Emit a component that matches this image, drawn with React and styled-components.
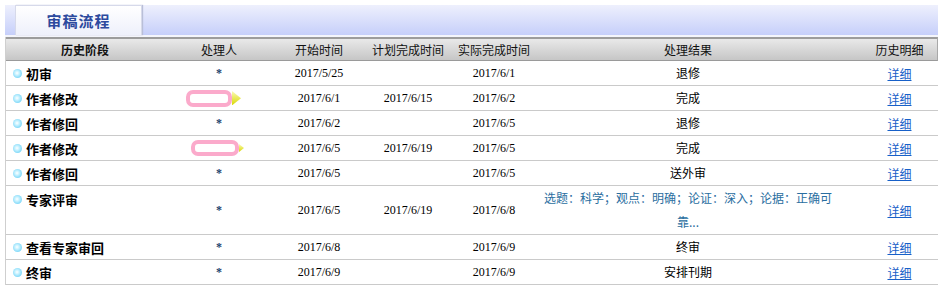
import React from 'react';
import styled, { createGlobalStyle } from 'styled-components';

const GlobalStyle = createGlobalStyle`
	body {
		margin: 0;
		background: #ffffff;
		font-family: "Liberation Serif", "Noto Sans CJK SC", serif;
	}
`;

const cjk = '"Noto Sans CJK SC", "Liberation Sans", sans-serif';

const COLS = [
	{ w: 158 },
	{ w: 110 },
	{ w: 90 },
	{ w: 88 },
	{ w: 84 },
	{ w: 304 },
	{ w: 99, pad: 20 }
];

const rows = [
	{ stage: '初审', who: '*', start: '2017/5/25', plan: '', done: '2017/6/1', result: '退修' },
	{ stage: '作者修改', who: 'tip', start: '2017/6/1', plan: '2017/6/15', done: '2017/6/2', result: '完成' },
	{ stage: '作者修回', who: '*', start: '2017/6/2', plan: '', done: '2017/6/5', result: '退修' },
	{ stage: '作者修改', who: 'tip2', start: '2017/6/5', plan: '2017/6/19', done: '2017/6/5', result: '完成' },
	{ stage: '作者修回', who: '*', start: '2017/6/5', plan: '', done: '2017/6/5', result: '送外审' },
	{ stage: '专家评审', who: '*', start: '2017/6/5', plan: '2017/6/19', done: '2017/6/8', result: '选题：科学；观点：明确；论证：深入；论据：正确可靠...', tall: true },
	{ stage: '查看专家审回', who: '*', start: '2017/6/8', plan: '', done: '2017/6/9', result: '终审' },
	{ stage: '终审', who: '*', start: '2017/6/9', plan: '', done: '2017/6/9', result: '安排刊期' }
];

const Page = styled.div`
	width: 933px;
	margin: 0 2px 0 5px;
`;

const TabBar = styled.div`
	display: flex;
	align-items: flex-end;
	margin-top: 5px;
	height: 30px;
	padding-left: 10px;
	background: linear-gradient(to bottom, #eef0fd, #c6cffa);
	border-bottom: 2px solid #f4f5fb;
`;

const Tab = styled.div`
	width: 125px;
	height: 29px;
	display: flex;
	align-items: center;
	justify-content: center;
	background: linear-gradient(to bottom, #ffffff, #eef0fb);
	border: 1px solid #d6d9ea;
	border-bottom: none;
	box-shadow: 1px 0 1px #b9bfd8;
	font-family: ${cjk};
	font-weight: bold;
	font-size: 15px;
	letter-spacing: 1px;
	color: #2d4a9e;
`;

const Table = styled.div`
	border-left: 1px solid #cfcfcf;
`;

const HeadRow = styled.div`
	display: flex;
	height: 21px;
	align-items: center;
	background: linear-gradient(to bottom, #e9e9e9, #c6c6c6);
	border-top: 2px solid #9c9c9c;
	border-bottom: 1px solid #9a9a9a;
	border-right: 1px solid #a8a8a8;
`;

const Row = styled.div`
	display: flex;
	height: ${p => (p.$tall ? 48 : 24)}px;
	border-bottom: 1px solid #cacaca;
`;

const Cell = styled.div`
	width: ${p => p.$w}px;
	padding-left: ${p => p.$pad || 0}px;
	flex-shrink: 0;
	box-sizing: border-box;
	display: flex;
	align-items: ${p => (p.$top ? 'flex-start' : 'center')};
	justify-content: ${p => (p.$left ? 'flex-start' : 'center')};
	text-align: center;
	font-size: 12px;
	color: #000;
`;

const HeadText = styled.span`
	font-family: ${cjk};
	font-size: 12px;
	font-weight: ${p => (p.$bold ? 'bold' : 'normal')};
	color: #111;
`;

const Stage = styled.span`
	display: flex;
	align-items: center;
	gap: 4px;
	padding-left: 7px;
	padding-top: ${p => (p.$top ? '4px' : 0)};
	font-family: ${cjk};
	font-weight: bold;
	font-size: 13px;
	color: #000;
`;

const Dot = styled.span`
	width: 9px;
	height: 9px;
	border-radius: 50%;
	background: radial-gradient(circle at 45% 45%, #ffffff 0%, #c8f2ff 30%, #4cc6f4 100%);
`;

const DateText = styled.span`
	font-family: "Liberation Serif", serif;
	font-size: 12px;
`;

const Star = styled.span`
	font-family: "Liberation Serif", serif;
	font-size: 12px;
	font-weight: bold;
	color: #1d3f6e;
`;

const Result = styled.span`
	font-family: ${cjk};
	font-size: 12px;
	line-height: 24px;
	color: ${p => (p.$blue ? '#2a6ea0' : '#000')};
	max-width: 290px;
`;

const Detail = styled.a`
	font-family: ${cjk};
	font-size: 12px;
	color: #1760c8;
	text-decoration: underline;
`;

const Tip = styled.span`
	display: flex;
	align-items: center;
	margin-left: ${p => p.$shift}px;
`;

const TipBox = styled.span`
	display: block;
	flex-shrink: 0;
	box-sizing: border-box;
	width: ${p => p.$w}px;
	height: ${p => p.$h}px;
	border: 4px solid #fbaacb;
	border-radius: 7px;
	background: #fff;
`;

const Arrow = ({ size }) => (
	<svg width={size} height={size * 1.6} viewBox="0 0 10 16">
		<defs>
			<linearGradient id={`ar${size}`} x1="0" y1="0" x2="0" y2="1">
				<stop offset="0" stopColor="#fbfbb8" />
				<stop offset="1" stopColor="#d8d800" />
			</linearGradient>
		</defs>
		<polygon points="0,0 10,8 0,16" fill={`url(#ar${size})`} />
	</svg>
);

const Who = ({ v }) => {
	if (v === 'tip') {
		return (
			<Tip $shift={-12}>
				<TipBox $w={46} $h={17} />
				<Arrow size={9} />
			</Tip>
		);
	}
	if (v === 'tip2') {
		return (
			<Tip $shift={-4}>
				<TipBox $w={48} $h={16} />
				<Arrow size={5} />
			</Tip>
		);
	}
	return <Star>*</Star>;
};

const heads = ['历史阶段', '处理人', '开始时间', '计划完成时间', '实际完成时间', '处理结果', '历史明细'];

export default function App() {
	return (
		<Page>
			<GlobalStyle />
			<TabBar>
				<Tab>审稿流程</Tab>
			</TabBar>
			<Table>
				<HeadRow>
					{heads.map((h, i) => (
						<Cell key={h} $w={COLS[i].w} $pad={COLS[i].pad}>
							<HeadText $bold={i === 0}>{h}</HeadText>
						</Cell>
					))}
				</HeadRow>
				{rows.map((r, i) => (
					<Row key={i} $tall={r.tall}>
						<Cell $w={COLS[0].w} $left $top={r.tall}>
							<Stage $top={r.tall}>
								<Dot />
								{r.stage}
							</Stage>
						</Cell>
						<Cell $w={COLS[1].w}><Who v={r.who} /></Cell>
						<Cell $w={COLS[2].w}><DateText>{r.start}</DateText></Cell>
						<Cell $w={COLS[3].w}><DateText>{r.plan}</DateText></Cell>
						<Cell $w={COLS[4].w}><DateText>{r.done}</DateText></Cell>
						<Cell $w={COLS[5].w}><Result $blue={r.tall}>{r.result}</Result></Cell>
						<Cell $w={COLS[6].w} $pad={COLS[6].pad}><Detail href="#">详细</Detail></Cell>
					</Row>
				))}
			</Table>
		</Page>
	);
}
